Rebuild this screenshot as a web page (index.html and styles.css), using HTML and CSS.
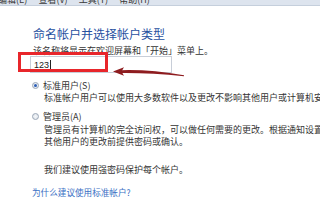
FILE: index.html
```html
<!DOCTYPE html>
<html lang="zh-CN">
<head>
<meta charset="utf-8">
<link rel="stylesheet" href="styles.css">
</head>
<body>
<div class="menubar">
  <div class="menu-items">
    <span class="mi">编辑(E)</span><span class="mi">查看(V)</span><span class="mi">工具(T)</span><span class="mi">帮助(H)</span>
  </div>
</div>
<div class="content">
  <h1 class="title">命名帐户并选择帐户类型</h1>
  <p class="hint">该名称将显示在欢迎屏幕和「开始」菜单上。</p>
  <div class="input"><span class="value">123</span><span class="caret"></span></div>
  <div class="option">
    <span class="radio checked"></span><span class="label">标准用户(S)</span>
  </div>
  <p class="desc first">标准帐户用户可以使用大多数软件以及更改不影响其他用户或计算机安全的系统设置。</p>
  <div class="option second">
    <span class="radio"></span><span class="label">管理员(A)</span>
  </div>
  <p class="desc admin">管理员有计算机的完全访问权，可以做任何需要的更改。根据通知设置，可能会要求管理员在做出会影响</p>
  <p class="desc">其他用户的更改前提供密码或确认。</p>
  <p class="desc recommend">我们建议使用强密码保护每个帐户。</p>
  <a class="link" href="#">为什么建议使用标准帐户?</a>
</div>
<svg class="annotation" width="320" height="200" viewBox="0 0 320 200">
  <rect x="19.5" y="53.5" width="87" height="17" fill="none" stroke="#e8262b" stroke-width="3"/>
  <path d="M121 70.2 Q150 69.3 184 75.2 L184 76.2 Q150 72.6 121 72.9 Z" fill="#8e1c1f"/>
  <path d="M113 71.5 L124 67.3 L121.5 71.5 L124 75.7 Z" fill="#8e1c1f"/>
</svg>
</body>
</html>
```
FILE: styles.css
```css
html, body {
  margin: 0;
  padding: 0;
}
body {
  width: 320px;
  height: 200px;
  overflow: hidden;
  background: #ffffff;
  font-family: "Noto Sans CJK SC", "Noto Sans", sans-serif;
  color: #2b2b2b;
  position: relative;
}
.menubar {
  height: 5px;
  overflow: hidden;
  display: flex;
  align-items: flex-end;
  background: #dde4ee;
  border-bottom: 1px solid #c5cfdc;
}
.menu-items {
  flex: none;
  margin-left: -2px;
  font-size: 9px;
  line-height: 10px;
  color: #3a3a3a;
  white-space: nowrap;
}
.mi {
  margin-right: 11px;
}
.content {
  padding-left: 33px;
  white-space: nowrap;
}
.title {
  margin: 21px 0 0;
  font-size: 12px;
  line-height: 14px;
  font-weight: normal;
  color: #27509f;
}
.hint {
  margin: 4px 0 0;
  font-size: 9px;
  line-height: 12px;
  color: #333;
}
.input {
  margin: -1px 0 0 -3px;
  width: 142px;
  height: 17px;
  box-sizing: border-box;
  border: 1px solid #c8ced8;
  background: #fff;
  padding-left: 3px;
  display: flex;
  align-items: center;
  font-family: "Liberation Sans", sans-serif;
  font-size: 9px;
  color: #222;
}
.caret {
  width: 1px;
  height: 10px;
  background: #222;
  margin-left: 1px;
}
.option {
  margin-top: 6px;
  display: flex;
  align-items: center;
  height: 12px;
  font-size: 9px;
  color: #333;
}
.option.second {
  margin-top: 6px;
}
.radio {
  width: 7px;
  height: 7px;
  box-sizing: border-box;
  border-radius: 50%;
  border: 1px solid #9aa6b6;
  background: radial-gradient(circle, #f4f6f9 0%, #dde3ea 100%);
  margin-left: -1px;
  margin-right: 4px;
  display: flex;
  align-items: center;
  justify-content: center;
}
.radio.checked::after {
  content: "";
  width: 3px;
  height: 3px;
  border-radius: 50%;
  background: #2c5fb7;
}
.desc {
  margin: 0;
  padding-left: 11px;
  font-size: 9px;
  line-height: 12px;
  color: #333;
}
.desc.first {
  margin-top: 1px;
}
.desc.admin {
  margin-top: 2px;
}
.recommend {
  margin-top: 16px;
}
.link {
  display: block;
  margin: 10px 0 0 -1px;
  font-size: 8.6px;
  line-height: 12px;
  color: #3a6fc4;
  text-decoration: none;
}
.annotation {
  position: absolute;
  left: 0;
  top: 0;
  pointer-events: none;
}
```
